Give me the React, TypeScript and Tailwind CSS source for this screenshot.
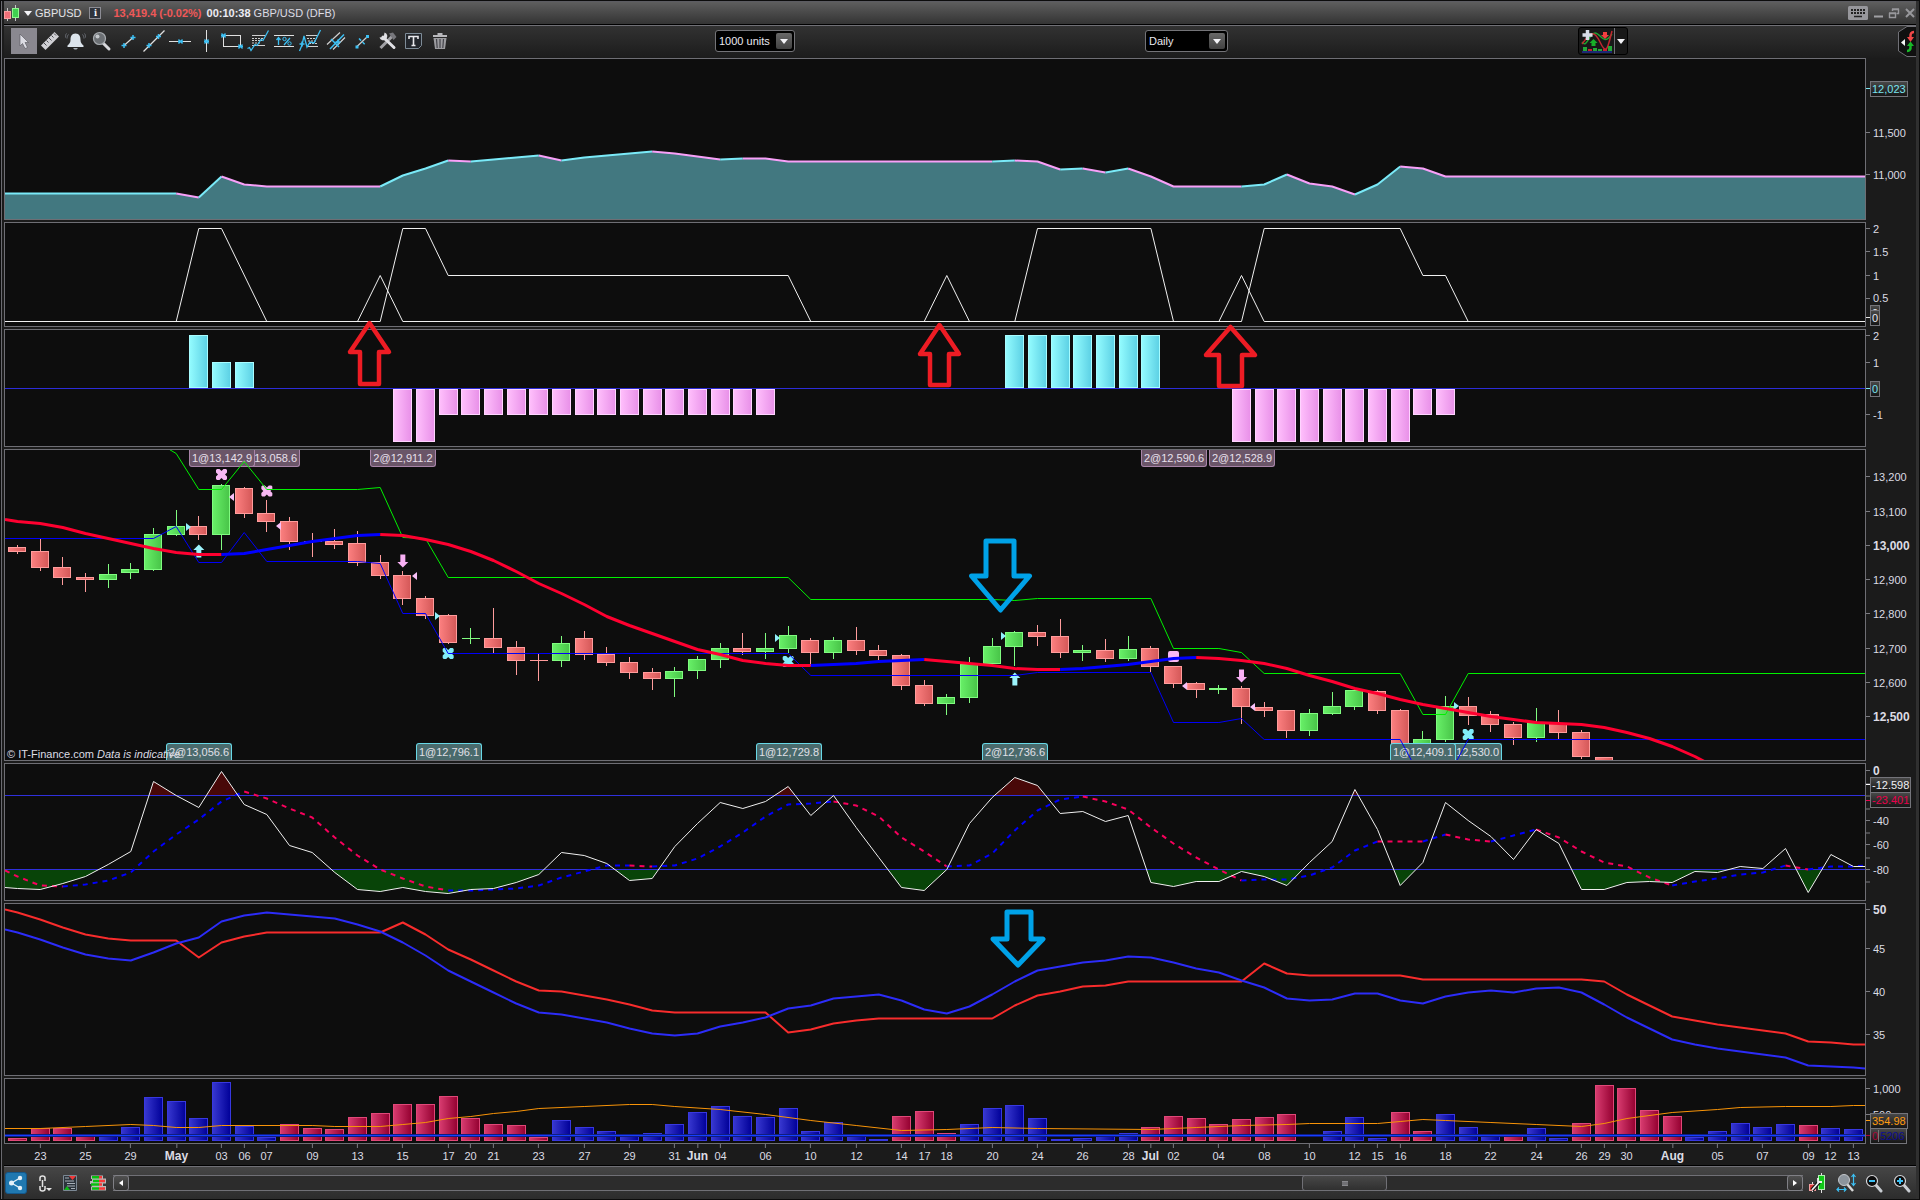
import type { ReactNode } from "react";

type Point = [number, number];
type Run = [number, number, string];
type Tick = { y: number; text?: string; bold?: boolean };
type Box = { y: number; text: ReactNode; tone: string; mark?: string };

// Plot coordinates: bar 0 sits at x=17.5, bars outside the range stick to the plot edges
const X = (i: number) => (i < 0 ? 5 : i > 81 ? 1865 : 17.5 + i * 22.667);
const BX = (i: number) => Math.round(X(i) - 0.5);
const toPoints = (pts: Point[]) => pts.map(([i, y]) => `${X(i).toFixed(1)},${y + 0.5}`).join(" ");
const series = (ys: number[]): Point[] => ys.map((y, n) => [n - 1, y]);

const WHITE = "#f0f0f0";
const CYAN = "#7aeaf8";
const PINK = "#f8a0f8";
const BLUE = "#3cc0f4";

const EQUITY: Point[] = [
  [-1, 193], [7, 193], [8, 197], [9, 176], [10, 184], [11, 186], [16, 186], [17, 175], [18, 168], [19, 160],
  [20, 161], [21, 159], [22, 157], [23, 155], [24, 160], [25, 157], [26, 155], [27, 153], [28, 151], [29, 153],
  [30, 156], [31, 159], [32, 158], [33, 158], [34, 161], [43, 161], [44, 160], [45, 161], [46, 169], [47, 168],
  [48, 172], [49, 168], [50, 176], [51, 186], [54, 186], [55, 184], [56, 174], [57, 183], [58, 186], [59, 194],
  [60, 184], [61, 166], [62, 168], [63, 176], [82, 176],
];
const EQUITY_RUNS: Run[] = [
  [-1, 7, CYAN], [7, 8, PINK], [8, 9, CYAN], [9, 16, PINK], [16, 19, CYAN], [19, 20, PINK], [20, 23, CYAN],
  [23, 24, PINK], [24, 28, CYAN], [28, 31, PINK], [31, 32, CYAN], [32, 43, PINK], [43, 44, CYAN], [44, 46, PINK],
  [46, 47, CYAN], [47, 48, PINK], [48, 49, CYAN], [49, 54, PINK], [54, 56, CYAN], [56, 59, PINK], [59, 61, CYAN],
  [61, 82, PINK],
];

const SIGNAL_A: Point[] = [
  [-1, 321], [7, 321], [8, 228], [9, 228], [11, 321], [16, 321], [17, 228], [18, 228], [19, 275], [34, 275],
  [35, 321], [44, 321], [45, 228], [50, 228], [51, 321], [54, 321], [55, 228], [61, 228], [62, 275], [63, 275],
  [64, 321], [82, 321],
];
const SIGNAL_B: Point[] = [
  [-1, 321], [15, 321], [16, 275], [17, 321], [40, 321], [41, 275], [42, 321], [53, 321], [54, 275], [55, 321], [82, 321],
];

const POSITIONS: [number, number, number][] = [
  [8, 8, 2], [9, 10, 1], [17, 18, -2], [19, 33, -1], [44, 50, 2], [54, 61, -2], [62, 63, -1],
];

// [up, body top, body bottom, high, low]
const CANDLES: [number, number, number, number, number][] = [
  [0, 547, 552, 545, 554], [0, 551, 568, 539, 571], [0, 567, 578, 557, 585], [0, 577, 580, 573, 592],
  [1, 574, 580, 564, 588], [1, 569, 573, 563, 579], [1, 534, 570, 528, 571], [1, 526, 535, 510, 536],
  [0, 526, 535, 516, 540], [1, 485, 535, 484, 550], [0, 488, 514, 487, 518], [0, 513, 522, 500, 532],
  [0, 521, 542, 517, 550], [0, 541, 542, 533, 557], [0, 541, 545, 529, 549], [0, 543, 563, 531, 566],
  [0, 562, 576, 555, 579], [0, 575, 599, 571, 605], [0, 598, 616, 596, 619], [0, 615, 643, 614, 644],
  [1, 638, 639, 628, 644], [0, 638, 648, 608, 653], [0, 647, 661, 641, 675], [0, 660, 661, 654, 681],
  [1, 643, 661, 636, 667], [0, 638, 655, 631, 660], [0, 654, 663, 647, 666], [0, 662, 673, 657, 679],
  [0, 672, 679, 668, 690], [1, 671, 679, 667, 697], [1, 659, 671, 656, 679], [1, 648, 660, 643, 668],
  [0, 648, 652, 633, 655], [1, 648, 652, 633, 659], [1, 635, 649, 626, 653], [0, 640, 653, 638, 666],
  [1, 640, 653, 637, 659], [0, 640, 651, 627, 655], [0, 650, 656, 645, 660], [0, 655, 686, 654, 690],
  [0, 685, 704, 680, 706], [1, 697, 704, 694, 715], [1, 664, 698, 657, 703], [1, 646, 664, 638, 666],
  [1, 632, 647, 631, 666], [0, 632, 637, 625, 646], [0, 636, 653, 619, 658], [1, 650, 653, 645, 661],
  [0, 650, 659, 639, 662], [1, 649, 659, 636, 661], [0, 648, 667, 646, 672], [0, 666, 684, 666, 688],
  [0, 683, 690, 682, 698], [1, 688, 690, 685, 694], [0, 688, 707, 686, 724], [0, 707, 711, 702, 717],
  [0, 710, 731, 710, 738], [1, 713, 731, 709, 736], [1, 706, 714, 692, 715], [1, 690, 707, 689, 710],
  [0, 691, 711, 690, 714], [0, 710, 744, 709, 744], [1, 739, 744, 731, 744], [1, 706, 740, 696, 742],
  [0, 706, 716, 697, 725], [0, 714, 725, 711, 732], [0, 724, 738, 722, 745], [1, 722, 738, 708, 742],
  [0, 723, 733, 710, 739], [0, 732, 757, 730, 759], [0, 757, 770, 757, 770],
];

const AVERAGE = series([
  519, 521, 523, 527, 533, 538, 543, 548, 552, 554, 554, 553, 549, 545, 541, 538, 535, 534, 535, 539, 544, 551, 560,
  571, 583, 593, 604, 616, 625, 633, 641, 649, 654, 660, 663, 665, 665, 664, 663, 661, 660, 659, 661, 663, 665, 668,
  669, 669, 668, 666, 664, 661, 658, 657, 658, 660, 663, 668, 675, 681, 688, 693, 699, 704, 708, 712, 716, 719, 722,
  723, 724, 727, 732, 738, 746, 756, 768,
]);
const AVERAGE_RUNS: Run[] = [
  [-1, 9, "#ff0030"], [9, 16, "#0000ff"], [16, 35, "#ff0030"], [35, 40, "#0000ff"], [40, 46, "#ff0030"],
  [46, 52, "#0000ff"], [52, 75, "#ff0030"],
];

const UPPER: Point[] = [
  [6.7, 449], [7, 453], [8, 489], [9, 489], [10, 461], [11, 489], [15, 489], [16, 487], [17, 537], [18, 538],
  [19, 577], [34, 577], [35, 599], [43, 599], [44, 600], [45, 598], [50, 598], [51, 648], [53, 648], [54, 652],
  [55, 673], [61, 673], [62, 714], [63, 714], [64, 673], [82, 673],
];
const LOWER: Point[] = [
  [-1, 538], [6, 538], [7, 526], [8, 562], [9, 562], [10, 532], [11, 561], [15, 561], [16, 563], [17, 613],
  [18, 613], [19, 653], [34, 653], [35, 675], [44, 675], [45, 672], [50, 672], [51, 722], [53, 722], [54, 718],
  [55, 739], [61, 739], [62, 781], [63, 781], [64, 739], [82, 739],
];

const EXIT_TAGS: [number, string][] = [
  [11, "1@13,058.6"], [9, "1@13,142.9"], [17, "2@12,911.2"], [51, "2@12,590.6"], [54, "2@12,528.9"],
];
const ENTRY_TAGS: [number, string][] = [
  [8, "2@13,056.6"], [19, "1@12,796.1"], [34, "1@12,729.8"], [44, "2@12,736.6"], [64, "1@12,530.0"],
  [62, "1@12,409.1"],
];

const OSCILLATOR = series([
  887, 888, 889, 883, 876, 864, 851, 781, 795, 807, 771, 804, 814, 845, 852, 872, 889, 891, 887, 891, 893, 889, 888,
  882, 874, 852, 855, 863, 880, 878, 846, 823, 802, 808, 801, 786, 815, 795, 827, 857, 887, 890, 869, 823, 797, 777,
  785, 813, 811, 821, 815, 882, 886, 881, 881, 871, 876, 885, 862, 841, 789, 829, 885, 862, 802, 820, 836, 859, 829,
  843, 889, 889, 882, 881, 882, 871, 872, 866, 868, 848, 892, 854, 866, 866,
]);
const TREND = series([
  870, 876, 885, 886, 884, 880, 872, 851, 834, 819, 801, 791, 798, 808, 817, 837, 855, 869, 878, 886, 890, 890, 889,
  888, 885, 877, 871, 865, 865, 866, 865, 858, 846, 832, 816, 804, 803, 801, 805, 816, 837, 851, 866, 865, 853, 830,
  810, 799, 796, 801, 809, 827, 843, 857, 869, 880, 879, 879, 875, 867, 850, 841, 841, 841, 834, 839, 841, 835, 829,
  837, 851, 862, 866, 877, 885, 881, 878, 874, 872, 865, 869, 866, 866, 865,
]);
const TREND_DOWN = "#f8005c";
const TREND_UP = "#0000ff";
const TREND_RUNS: Run[] = [
  [-1, 2, TREND_DOWN], [2, 10, TREND_UP], [10, 19, TREND_DOWN], [19, 27, TREND_UP], [27, 28, TREND_DOWN],
  [28, 36, TREND_UP], [36, 41, TREND_DOWN], [41, 47, TREND_UP], [47, 54, TREND_DOWN], [54, 60, TREND_UP],
  [60, 62, TREND_DOWN], [62, 63, TREND_UP], [63, 65, TREND_DOWN], [65, 67, TREND_UP], [67, 73, TREND_DOWN],
  [73, 78, TREND_UP], [78, 79, TREND_DOWN], [79, 82, TREND_UP],
];

const SLOW: Point[] = [
  [-1, 909], [0, 912], [1, 919], [2, 927], [3, 934], [4, 938], [5, 940], [7, 940], [8, 957], [9, 942], [10, 936],
  [11, 932], [16, 932], [17, 922], [18, 934], [19, 949], [20, 959], [21, 970], [22, 981], [23, 990], [24, 991],
  [25, 995], [26, 999], [27, 1004], [28, 1010], [29, 1012], [33, 1012], [34, 1032], [35, 1029], [36, 1023],
  [37, 1020], [38, 1018], [43, 1018], [44, 1005], [45, 995], [46, 991], [47, 986], [48, 985], [49, 981], [54, 981],
  [55, 963], [56, 973], [57, 975], [61, 975], [62, 979], [69, 979], [70, 981], [71, 994], [72, 1005], [73, 1016],
  [74, 1020], [75, 1024], [76, 1027], [77, 1030], [78, 1033], [79, 1041], [80, 1042], [81, 1044], [82, 1044],
];
const FAST = series([
  929, 932, 939, 947, 954, 958, 960, 952, 943, 937, 921, 915, 912, 914, 916, 918, 924, 931, 942, 955, 970, 981, 992,
  1003, 1012, 1014, 1018, 1022, 1028, 1033, 1035, 1033, 1026, 1022, 1017, 1008, 1005, 998, 996, 994, 1000, 1009, 1013,
  1006, 994, 981, 970, 966, 962, 960, 956, 957, 962, 968, 972, 980, 987, 998, 1000, 999, 993, 993, 1000, 1003, 996,
  992, 990, 992, 988, 987, 992, 1004, 1017, 1028, 1039, 1044, 1048, 1051, 1054, 1057, 1065, 1066, 1067, 1068,
]);

const VOLUME = [
  1138, 1128, 1128, 1134, 1135, 1127, 1097, 1101, 1118, 1082, 1126, 1137, 1124, 1128, 1129, 1117, 1113, 1104, 1104,
  1096, 1118, 1124, 1125, 1137, 1120, 1127, 1131, 1135, 1133, 1124, 1112, 1106, 1116, 1117, 1108, 1131, 1122, 1135,
  1139, 1116, 1111, 1133, 1124, 1108, 1105, 1118, 1139, 1138, 1136, 1133, 1127, 1116, 1118, 1124, 1119, 1117, 1114,
  1140, 1131, 1117, 1138, 1112, 1131, 1114, 1127, 1136, 1134, 1128, 1138, 1123, 1085, 1088, 1110, 1116, 1137, 1131,
  1123, 1127, 1124, 1125, 1128, 1129,
];
const DOWN_DAYS = new Set([
  0, 1, 2, 3, 12, 13, 14, 15, 16, 17, 18, 19, 20, 21, 22, 23, 39, 40, 41, 50, 51, 52, 53, 54, 55, 56, 61, 62, 66, 69,
  70, 71, 72, 73, 79,
]);
const VOLUME_AVERAGE: Point[] = [
  [-1, 1128], [1, 1128], [3, 1126], [5, 1124], [6, 1125], [7, 1127], [8, 1127], [9, 1125], [13, 1125], [14, 1126],
  [16, 1126], [17, 1124], [18, 1122], [19, 1118], [20, 1116], [21, 1113], [22, 1111], [23, 1108], [25, 1106],
  [27, 1104], [28, 1104], [29, 1106], [31, 1109], [33, 1114], [35, 1120], [37, 1125], [39, 1130], [41, 1129],
  [43, 1127], [45, 1128], [50, 1129], [52, 1127], [54, 1125], [56, 1124], [57, 1123], [60, 1123], [61, 1121],
  [62, 1119], [63, 1120], [65, 1122], [67, 1124], [69, 1126], [70, 1123], [71, 1118], [73, 1112], [75, 1109],
  [76, 1107], [78, 1106], [80, 1106], [81, 1105], [82, 1105],
];

const DATES: [number, string][] = [
  [1, "23"], [3, "25"], [5, "29"], [7, "May"], [9, "03"], [10, "06"], [11, "07"], [13, "09"], [15, "13"], [17, "15"],
  [19, "17"], [20, "20"], [21, "21"], [23, "23"], [25, "27"], [27, "29"], [29, "31"], [30, "Jun"], [31, "04"],
  [33, "06"], [35, "10"], [37, "12"], [39, "14"], [40, "17"], [41, "18"], [43, "20"], [45, "24"], [47, "26"],
  [49, "28"], [50, "Jul"], [51, "02"], [53, "04"], [55, "08"], [57, "10"], [59, "12"], [60, "15"], [61, "16"],
  [63, "18"], [65, "22"], [67, "24"], [69, "26"], [70, "29"], [71, "30"], [73, "Aug"], [75, "05"], [77, "07"],
  [79, "09"], [80, "12"], [81, "13"],
];

const Line = ({ points, color, width = 1 }: { points: Point[]; color: string; width?: number }) => (
  <polyline points={toPoints(points)} fill="none" stroke={color} strokeWidth={width} strokeLinejoin="round" />
);

const RunLine = ({ points, runs, width, dash }: { points: Point[]; runs: Run[]; width: number; dash?: string }) => (
  <>
    {runs.map(([from, to, color]) => (
      <polyline
        key={from}
        points={toPoints(points.filter(([i]) => i >= from && i <= to))}
        fill="none"
        stroke={color}
        strokeWidth={width}
        strokeDasharray={dash}
        strokeLinejoin="round"
      />
    ))}
  </>
);

const Plot = ({ top, bottom, children }: { top: number; bottom: number; children: ReactNode }) => (
  <svg
    viewBox={`5 ${top + 1} 1860 ${bottom - top - 1}`}
    preserveAspectRatio="none"
    className="absolute inset-0 block size-full"
  >
    {children}
  </svg>
);

type PanelProps = { top: number; bottom: number; ticks: Tick[]; boxes?: Box[]; children: ReactNode };

const Panel = ({ top, bottom, ticks, boxes = [], children }: PanelProps) => {
  const place = (y: number) => ({ top: `${((y + 0.5 - top) / (bottom + 1 - top)) * 100}%` });
  return (
    <section className="flex min-h-0 basis-0" style={{ flexGrow: bottom + 1 - top }}>
      <div className="relative flex-1 overflow-hidden border border-[#6e6e74] bg-[#0d0d0d]">{children}</div>
      <div className="relative w-[50px] text-[11px] leading-4 text-[#dcdce4]">
        {ticks.map((tick) => (
          <div key={tick.y} className="absolute left-0 flex -translate-y-1/2 items-center" style={place(tick.y)}>
            <span className="h-px w-1 bg-[#7c7c82]" />
            <span className={tick.bold ? "ml-[3px] text-xs leading-4 font-bold" : "ml-[3px]"}>{tick.text}</span>
          </div>
        ))}
        {boxes.map((box) => (
          <div key={box.y} className="absolute left-0 z-10 flex -translate-y-1/2 items-center" style={place(box.y)}>
            <span className={`h-px w-1 ${box.mark ?? "bg-transparent"}`} />
            <span
              className={`border border-[#74747a] bg-linear-to-b from-[#484848] to-[#161616] px-px leading-[14px] ${box.tone}`}
            >
              {box.text}
            </span>
          </div>
        ))}
      </div>
    </section>
  );
};

const TradeTags = ({ tags, entry }: { tags: [number, string][]; entry?: boolean }) => (
  <>
    {tags.map(([i, text]) => (
      <span
        key={i}
        className={
          entry
            ? "absolute bottom-0 h-[17px] w-[66px] -translate-x-1/2 rounded-t-[3px] border border-b-0 border-[#68d8e6] bg-[#4a6a6c] text-center text-[11px] leading-4 text-[#e0e0e8]"
            : "absolute top-0 h-[17px] w-[66px] -translate-x-1/2 rounded-b-[3px] border border-t-0 border-[#a884a8] bg-[#6a5568] text-center text-[11px] leading-4 text-[#e8e0ec]"
        }
        style={{ left: `${((BX(i) + 1 - 5) / 1860) * 100}%` }}
      >
        {text}
      </span>
    ))}
  </>
);

const Cross = ({ i, y, color }: { i: number; y: number; color: string }) => (
  <g transform={`translate(${X(i)} ${y})`} fill={color}>
    <path d="M-4.500 -5.500h2.500l2 2l2 -2h2.500l1 1v2.500l-2 2l2 2v2.500l-1 1h-2.500l-2 -2l-2 2h-2.500l-1 -1v-2.500l2 -2l-2 -2v-2.500z" />
  </g>
);

const SmallArrow = ({ i, y, up }: { i: number; y: number; up?: boolean }) => (
  <path
    transform={`translate(${X(i)} ${y}) scale(1 ${up ? 1 : -1})`}
    d="M0 -6.500L5.500 -1H2.500V6.500H-2.500V-1H-5.500Z"
    fill={up ? "#9cf4fc" : "#f8b0f4"}
  />
);

const Star = ({ x, y }: { x: number; y: number }) => (
  <path d={`M${x - 2} ${y - 2}l4 4m0 -4l-4 4M${x - 2.5} ${y}h5`} stroke={BLUE} strokeWidth={1.3} />
);
const Plus = ({ x, y }: { x: number; y: number }) => (
  <path d={`M${x - 2.5} ${y}h5M${x} ${y - 2.5}v5`} stroke={BLUE} strokeWidth={1.5} />
);

const TOOLS: [string, ReactNode][] = [
  ["Pointer", <path d="M9 6V18L11.500 15.500L14 20.500L16.500 19.500L14 14.500H17.500Z" fill="#dcdce4" stroke="#55555c" strokeWidth={0.6} />],
  [
    "Ruler",
    <>
      <path d="M4 17.500L17.500 4L22 8.500L8.500 22Z" fill="#d0d0d4" />
      <path d="M7 15l2.500 2.500M9.500 12.500l2 2M12 10l2.500 2.500M14.500 7.500l2 2M17 5.500l2 2" stroke="#4a4a50" strokeWidth={1} />
    </>,
  ],
  [
    "Alert",
    <>
      <path d="M12.500 5.500c-4 0 -5 3 -5 6.500c0 3 -1.500 4 -3 5.500v1.500h16v-1.500c-1.500 -1.500 -3 -2.500 -3 -5.500c0 -3.500 -1 -6.500 -5 -6.500z" fill="#dce4ec" />
      <path d="M10 20h5l-1.500 1.500h-2z" fill="#a8b0b8" />
      <path d="M5.500 6.500c-1 1 -1.500 2.500 -1.500 4M3.500 5.500c-1 1 -1 3 -1 4M19.500 6.500c1 1 1.500 2.500 1.500 4M21.500 5.500c1 1 1 3 1 4" fill="none" stroke="#6c7078" />
    </>,
  ],
  [
    "Magnifier",
    <>
      <path d="M14.500 15.500L20 21" stroke="#d8d8dc" strokeWidth={3} strokeLinecap="round" />
      <circle cx={10.500} cy={10.500} r={6} fill="#6c7074" stroke="#a8acb0" strokeWidth={1.200} />
      <circle cx={8.500} cy={8.500} r={2} fill="#c4c8cc" />
    </>,
  ],
  [
    "Segment",
    <>
      <path d="M9 17.500L18 9.500" stroke="#e0e0e0" strokeWidth={1.200} />
      <Plus x={9} y={17.500} />
      <Plus x={18} y={9.500} />
    </>,
  ],
  [
    "Line",
    <>
      <path d="M2.500 23.500L23.500 2.500" stroke="#e0e0e0" strokeWidth={1.200} />
      <Plus x={8} y={17.500} />
      <Plus x={17.500} y={8.500} />
    </>,
  ],
  [
    "Horizontal line",
    <>
      <path d="M2 13.500H24" stroke="#e0e0e0" />
      <Star x={13.500} y={13.500} />
    </>,
  ],
  [
    "Vertical line",
    <>
      <path d="M13.500 2V24" stroke="#e0e0e0" />
      <Star x={13.500} y={13.500} />
    </>,
  ],
  [
    "Rectangle",
    <>
      <rect x={4.500} y={7.500} width={17} height={11} fill="none" stroke="#e0e0e0" />
      <Star x={4.500} y={7.500} />
      <Star x={21.500} y={18.500} />
    </>,
  ],
  [
    "Fibonacci",
    <>
      <path d="M7 7.500H20M7 17.500H20" stroke="#d0d0d0" />
      <path d="M7 10.500H19M7 12.500H17M7 15H15" stroke="#d0d0d0" strokeDasharray="2 1" />
      <path d="M2.500 20.500l2 -1l1.500 3l4 -6l2 1l4 -6l2 1l5.500 -10" fill="none" stroke={BLUE} strokeWidth={1.300} />
    </>,
  ],
  [
    "Percentage",
    <>
      <path d="M3 7.500H23M3 18.500H23" stroke="#e0e0e0" />
      <path d="M7.500 17V10M5.500 12l2 -2.500l2 2.500M13 17l6 -7" fill="none" stroke={BLUE} strokeWidth={1.300} />
      <circle cx={13.500} cy={11} r={1.700} fill="none" stroke={BLUE} />
      <circle cx={18.500} cy={15.500} r={1.700} fill="none" stroke={BLUE} />
    </>,
  ],
  [
    "Fibonacci extension",
    <>
      <path d="M9 7.500H21M11 18.500H21" stroke="#d0d0d0" />
      <path d="M10 10.500H20M11 13H20M12 15.500H20" stroke="#d0d0d0" strokeDasharray="2 1" />
      <path d="M2.500 23l2.500 -6l2 -9l3 11l3 -5l4 1l6.500 -13" fill="none" stroke={BLUE} strokeWidth={1.300} />
      <Plus x={5} y={16} />
    </>,
  ],
  [
    "Channel",
    <>
      <path d="M4 16.500L17 4.500M10 21.500L22 9.500" stroke="#d0d0d0" strokeWidth={1.200} />
      <path d="M7 21L21 6.500M8 11l8 8" stroke={BLUE} strokeWidth={1.500} />
      <Plus x={15} y={14} />
    </>,
  ],
  [
    "Points",
    <>
      <path d="M8 18.500L18.500 8.500" stroke="#d0d0d0" strokeWidth={1.200} />
      <path d="M6.500 17.500h3v3h-3zM17 7h3v3h-3z" fill={BLUE} />
      <path d="M10 10.500l7 7" stroke={BLUE} strokeDasharray="3 2" strokeWidth={1.500} />
    </>,
  ],
  [
    "Settings",
    <>
      <path d="M5.500 20L17 8.500" stroke="#a0a0a4" strokeWidth={3} />
      <path d="M14 5.500l4 -1l3.500 4.500l-3 3z" fill="#77777c" />
      <path d="M8 9L19 19.500" stroke="#e0e0e4" strokeWidth={3} strokeLinecap="round" />
      <path d="M9.500 4.500a4 4 0 1 1 -5 5l3 -.5l1.500 -1.500z" fill="#e0e0e4" />
    </>,
  ],
  [
    "Text",
    <>
      <path d="M4.500 5.500H20.500V17.500L17.500 20.500H4.500Z" fill="#22262c" stroke="#7e8c98" />
      <path d="M8 11V8.500H17V11M12.500 8.500V17.500M10.500 17.500H14.500" fill="none" stroke="#e8e8ec" strokeWidth={1.600} />
    </>,
  ],
  [
    "Delete",
    <>
      <path d="M6.500 10h13l-1.500 11h-10z" fill="#9c9ca0" />
      <path d="M6 8h14M10.500 6h5" stroke="#b8b8bc" strokeWidth={2} />
      <path d="M9.500 11l.7 9M13 11v9M16.500 11l-.7 9" stroke="#44444a" strokeWidth={1.200} />
    </>,
  ],
];

const Triangle = () => (
  <svg viewBox="0 0 8 5" className="h-[5px] w-2">
    <path d="M0 0H8L4 5Z" fill="#f4f4f8" />
  </svg>
);

const Dropdown = ({ label, value, options, width }: { label: string; value: string; options: string[]; width: string }) => (
  <div className={`relative h-[22px] ${width}`}>
    <select
      aria-label={label}
      defaultValue={value}
      className="block h-[22px] w-full appearance-none rounded-[3px] border border-[#747478] bg-black pl-[3px] text-[11px] leading-4 text-[#e8e8f0]"
    >
      {options.map((option) => (
        <option key={option}>{option}</option>
      ))}
    </select>
    <span className="pointer-events-none absolute top-[3px] right-[3px] flex h-4 w-4 items-center justify-center rounded-[2px] bg-linear-to-b from-[#686868] to-[#424242]">
      <Triangle />
    </span>
  </div>
);

const TitleBar = () => (
  <header className="flex h-6 items-center border-t border-b border-t-[#5c5c62] border-b-black bg-linear-to-b from-[#5e5e5e] to-[#343434] text-[11px] leading-4">
    <svg viewBox="0 0 16 16" className="h-4 w-4">
      <path d="M3.500 3V16M11.500 0V16" stroke="#c8c8c8" />
      <rect x={0.500} y={6.500} width={6} height={7} fill="#f07078" stroke="#f8a0a0" />
      <rect x={8.500} y={3.500} width={6} height={9} fill="#40d050" stroke="#90f890" />
    </svg>
    <button aria-label="Instrument list" className="ml-1 flex">
      <Triangle />
    </button>
    <h1 className="ml-[3px] text-[#e4e4e8]">GBPUSD</h1>
    <button
      aria-label="Instrument information"
      className="ml-2 flex h-3 w-3 items-center justify-center border border-[#8c8c94] bg-[#30343c] font-serif text-[10px] leading-3 font-bold text-white"
    >
      i
    </button>
    <span className="ml-3 font-bold text-[#f05858]">13,419.4 (-0.02%)</span>
    <span className="ml-[5px] font-bold text-[#ececf4]">00:10:38</span>
    <span className="ml-[3px] text-[#dcdce4]">GBP/USD (DFB)</span>
    <div className="ml-auto flex items-center gap-1">
      <button aria-label="Keyboard">
        <svg viewBox="0 0 20 14" className="block h-3.5 w-5">
          <rect width={20} height={14} rx={1.500} fill="#97979c" />
          <path d="M3 4H17M3 7H17" stroke="#222" strokeWidth={2} strokeDasharray="2 1" />
          <path d="M6 10.500H14" stroke="#222" strokeWidth={1.500} />
        </svg>
      </button>
      <button aria-label="Minimize">
        <svg viewBox="0 0 12 12" className="block size-3">
          <path d="M2 9.500H11" stroke="#a0a0a4" strokeWidth={2} />
        </svg>
      </button>
      <button aria-label="Restore">
        <svg viewBox="0 0 12 12" className="block size-3" fill="none" stroke="#98989c">
          <path d="M4.500 4V2.500H10.500V6.500H8.500M4 2H11" strokeWidth={1.400} />
          <path d="M1.500 6.500H7.500V10.500H1.500ZM1 6H8" strokeWidth={1.400} />
        </svg>
      </button>
      <button aria-label="Close">
        <svg viewBox="0 0 12 12" className="block size-3">
          <path d="M2 2L10 10M10 2L2 10" stroke="#98989c" strokeWidth={2} />
        </svg>
      </button>
    </div>
  </header>
);

const Toolbar = () => (
  <div className="flex h-[33px] items-start border-t border-[#707076] bg-linear-to-b from-[#323232] to-[#1c1c1c]">
    <div className="ml-[7px] flex pt-[2px]">
      {TOOLS.map(([label, icon], n) => (
        <button key={label} aria-label={label} className={n === 0 ? "size-[26px] bg-[#8a8890]" : "size-[26px]"}>
          <svg viewBox="0 0 26 26" className="block size-[26px]">
            {icon}
          </svg>
        </button>
      ))}
    </div>
    <div className="flex-[262]" />
    <div className="pt-1">
      <Dropdown label="Displayed units" value="1000 units" options={["200 units", "500 units", "1000 units"]} width="w-20" />
    </div>
    <div className="flex-[350]" />
    <div className="pt-1">
      <Dropdown label="Timeframe" value="Daily" options={["Hourly", "Daily", "Weekly"]} width="w-[83px]" />
    </div>
    <div className="flex-[350]" />
    <div className="mt-px flex h-7 w-[50px] rounded-[3px] border border-black bg-[#181818]">
      <button aria-label="Add indicator" className="flex w-[35px] items-center justify-center">
        <svg viewBox="0 0 32 24" className="h-6 w-8">
          <path d="M1 13C6 20 8 4 14 4S22 18 31 5" fill="none" stroke="#1fa030" strokeWidth={1.500} />
          <path d="M1 15C8 6 12 -2 19 13S27 17 31 2" fill="none" stroke="#c02830" strokeWidth={1.500} />
          <path d="M2 18h4v4h-4zM12 19h4v3h-4zM17 20h4v2h-4zM27 17h4v5h-4z" fill="#24a838" />
          <path d="M7 20h4v2h-4zM22 20h4v2h-4z" fill="#c82030" />
          <path d="M1 23H31" stroke="#2038d0" />
          <path d="M6.500 1v10M1.500 6h10" stroke="#d8dce8" strokeWidth={3.500} />
          <path d="M22 3h4v3h2l-4 4l-4 -4h2z" fill="#f04040" />
          <path d="M12.500 10l4 4h-2v3h-4v-3h-2z" fill="#18b028" />
        </svg>
      </button>
      <button aria-label="Indicator menu" className="flex flex-1 items-center justify-center border-l border-[#707076]">
        <Triangle />
      </button>
    </div>
    <div className="flex-[270]" />
    <button aria-label="Show orders panel" className="block">
      <svg viewBox="0 0 18 31" className="block h-[31px] w-[18px]">
        <path d="M18 .5H9L.5 6V25L9 30.500H18" fill="#101010" stroke="#707076" />
        <path d="M7 13L3 16.500L7 20Z" fill="#f4f4f4" />
        <path d="M16 6Q12 6 12.500 11V13" fill="none" stroke="#f04848" strokeWidth={2.500} />
        <path d="M9 11H16L12.500 16Z" fill="#f04848" />
        <path d="M9 25Q13 25 12.500 20V18" fill="none" stroke="#18b828" strokeWidth={2.500} />
        <path d="M9 20H16L12.500 15.500Z" fill="#18b828" />
      </svg>
    </button>
  </div>
);

const EquityPanel = () => (
  <Panel
    top={58}
    bottom={219}
    ticks={[{ y: 132, text: "11,500" }, { y: 174, text: "11,000" }]}
    boxes={[{ y: 88, text: "12,023", tone: "text-[#78e4f0]", mark: "bg-[#78e4f0]" }]}
  >
    <Plot top={58} bottom={219}>
      <polygon points={`5,219 ${toPoints(EQUITY)} 1865,219`} fill="#427880" />
      <RunLine points={EQUITY} runs={EQUITY_RUNS} width={2} />
    </Plot>
  </Panel>
);

const SignalPanel = () => (
  <Panel
    top={222}
    bottom={326}
    ticks={[
      { y: 228, text: "2" },
      { y: 251, text: "1.5" },
      { y: 275, text: "1" },
      { y: 298, text: "0.5" },
    ]}
    boxes={[
      { y: 312, text: "0", tone: "text-[#e8e8f0]" },
      { y: 317, text: "0", tone: "text-[#e8e8f0]", mark: "bg-[#e8e8e8]" },
    ]}
  >
    <Plot top={222} bottom={326}>
      <Line points={SIGNAL_A} color={WHITE} />
      <Line points={SIGNAL_B} color={WHITE} />
    </Plot>
  </Panel>
);

const PositionPanel = () => (
  <Panel
    top={329}
    bottom={446}
    ticks={[{ y: 335, text: "2" }, { y: 362, text: "1" }, { y: 414, text: "-1" }]}
    boxes={[{ y: 388, text: "0", tone: "text-[#78e4f0]", mark: "bg-[#78e4f0]" }]}
  >
    <Plot top={329} bottom={446}>
      <defs>
        <linearGradient id="long">
          <stop offset="0" stopColor="#94fcff" />
          <stop offset="1" stopColor="#5cd0e4" />
        </linearGradient>
        <linearGradient id="short">
          <stop offset="0" stopColor="#ffc0fc" />
          <stop offset="1" stopColor="#e890e8" />
        </linearGradient>
      </defs>
      {POSITIONS.flatMap(([from, to, size]) =>
        Array.from({ length: to - from + 1 }, (_, n) => {
          const height = Math.abs(size) === 2 ? 53 : 26;
          return (
            <rect
              key={from + n}
              x={BX(from + n) - 8.5}
              y={size > 0 ? 388.5 - height : 389.5}
              width={18}
              height={height - 1}
              fill={size > 0 ? "url(#long)" : "url(#short)"}
              stroke={size > 0 ? "#a8fcff" : "#ffd4ff"}
            />
          );
        }),
      )}
      <path d="M5 388.5H1865" stroke="#2c2cd8" />
    </Plot>
  </Panel>
);

const PricePanel = () => (
  <Panel
    top={449}
    bottom={760}
    ticks={[
      { y: 476, text: "13,200" },
      { y: 511, text: "13,100" },
      { y: 545, text: "13,000", bold: true },
      { y: 579, text: "12,900" },
      { y: 613, text: "12,800" },
      { y: 648, text: "12,700" },
      { y: 682, text: "12,600" },
      { y: 716, text: "12,500", bold: true },
    ]}
  >
    <Plot top={449} bottom={760}>
      <defs>
        <linearGradient id="up">
          <stop offset="0" stopColor="#68f068" />
          <stop offset="1" stopColor="#48c448" />
        </linearGradient>
        <linearGradient id="down">
          <stop offset="0" stopColor="#fc8080" />
          <stop offset="1" stopColor="#d45858" />
        </linearGradient>
      </defs>
      {CANDLES.map(([up, top, bottom, high, low], i) => {
        const x = BX(i);
        const edge = up ? "#80fc80" : "#ff9c9c";
        return (
          <g key={i} stroke={edge}>
            <path d={`M${x + 0.5} ${high}V${low}`} />
            {bottom - top < 2 ? (
              <path d={`M${x - 8} ${top + 0.5}H${x + 10}`} />
            ) : (
              <rect x={x - 8.5} y={top + 0.5} width={17} height={bottom - top - 1} fill={up ? "url(#up)" : "url(#down)"} />
            )}
          </g>
        );
      })}
    </Plot>
    <TradeTags tags={EXIT_TAGS} />
    <TradeTags tags={ENTRY_TAGS} entry />
    <p className="absolute bottom-0 left-0.5 text-[11px] leading-3 text-[#dcdce4]">
      © IT-Finance.com <em>Data is indicative</em>
    </p>
    <Plot top={449} bottom={760}>
      <Cross i={9} y={474.5} color="#f8b8f4" />
      <Cross i={11} y={491} color="#f8b8f4" />
      <Cross i={19} y={653.5} color="#80ecf8" />
      <Cross i={34} y={661.5} color="#80ecf8" />
      <Cross i={64} y={734.5} color="#80ecf8" />
      <rect x={X(51) - 5.5} y={651} width={11} height={11} rx={2} fill="#f8b8f4" />
      <SmallArrow i={8} y={551} up />
      <SmallArrow i={44} y={679} up />
      <SmallArrow i={17} y={561} />
      <SmallArrow i={54} y={676} />
      {[[232, 497], [279, 526], [415, 576], [1185, 686], [1253, 707]].map(([x, y]) => (
        <path key={x} d={`M${x - 3} ${y}l5 -4v8z`} fill="#f8c0f8" />
      ))}
      {[[188, 527], [437, 616], [777, 638], [1003, 636], [1456, 706]].map(([x, y]) => (
        <path key={x} d={`M${x + 3} ${y}l-5 -4v8z`} fill="#90f0fc" />
      ))}
      <Line points={UPPER} color="#00f000" />
      <Line points={LOWER} color="#0000f8" />
      <RunLine points={AVERAGE} runs={AVERAGE_RUNS} width={3} />
    </Plot>
  </Panel>
);

const OscillatorPanel = () => (
  <Panel
    top={763}
    bottom={900}
    ticks={[
      { y: 770, text: "0", bold: true },
      { y: 783 },
      { y: 795 },
      { y: 808 },
      { y: 820, text: "-40" },
      { y: 832 },
      { y: 844, text: "-60" },
      { y: 857 },
      { y: 869, text: "-80" },
      { y: 881 },
    ]}
    boxes={[
      { y: 784, text: "-12.598", tone: "text-[#f0f0f4]", mark: "bg-white" },
      { y: 800, text: "-23.401", tone: "text-[#e8004c]", mark: "bg-[#e8004c]" },
    ]}
  >
    <Plot top={763} bottom={900}>
      <clipPath id="overbought">
        <rect x={5} y={763} width={1860} height={32} />
      </clipPath>
      <clipPath id="oversold">
        <rect x={5} y={869} width={1860} height={32} />
      </clipPath>
      <polygon points={`5,795 ${toPoints(OSCILLATOR)} 1865,795`} fill="#480808" clipPath="url(#overbought)" />
      <polygon points={`5,869 ${toPoints(OSCILLATOR)} 1865,869`} fill="#084408" clipPath="url(#oversold)" />
      <path d="M5 795.5H1865M5 869.5H1865" stroke="#3030dc" />
      <RunLine points={TREND} runs={TREND_RUNS} width={2} dash="5 5" />
      <Line points={OSCILLATOR} color="#f0f0f0" />
    </Plot>
  </Panel>
);

const StrengthPanel = () => (
  <Panel
    top={903}
    bottom={1075}
    ticks={[
      { y: 909, text: "50", bold: true },
      { y: 948, text: "45" },
      { y: 991, text: "40" },
      { y: 1034, text: "35" },
    ]}
  >
    <Plot top={903} bottom={1075}>
      <Line points={SLOW} color="#f82c2c" width={2} />
      <Line points={FAST} color="#2c2cf8" width={2} />
    </Plot>
  </Panel>
);

const VolumePanel = () => (
  <Panel
    top={1078}
    bottom={1143}
    ticks={[{ y: 1088, text: "1,000" }, { y: 1114, text: "500" }]}
    boxes={[
      { y: 1120, text: "354.98", tone: "text-[#ff9c10]", mark: "bg-[#ff9c10]" },
      {
        y: 1135,
        text: (
          <>
            <span className="mr-px border-r border-[#74747a] text-[#a8083c]">0</span>5206
          </>
        ),
        tone: "text-[#0c0c94]",
        mark: "bg-[#a8083c]",
      },
    ]}
  >
    <Plot top={1078} bottom={1143}>
      <defs>
        <linearGradient id="volumeUp">
          <stop offset="0" stopColor="#3838d0" />
          <stop offset="1" stopColor="#000098" />
        </linearGradient>
        <linearGradient id="volumeDown">
          <stop offset="0" stopColor="#d83c70" />
          <stop offset="1" stopColor="#940030" />
        </linearGradient>
      </defs>
      {VOLUME.map((top, i) => {
        const down = DOWN_DAYS.has(i);
        return (
          <rect
            key={i}
            x={BX(i) - 8.5}
            y={top + 0.5}
            width={18}
            height={1140 - top}
            fill={down ? "url(#volumeDown)" : "url(#volumeUp)"}
            stroke={down ? "#e04878" : "#3838e0"}
          />
        );
      })}
      <path d="M5 1135.5H1865" stroke="#101c80" strokeWidth={3} />
      <path d="M5 1135.5H1865" stroke="#1440ff" />
      <Line points={VOLUME_AVERAGE} color="#f89408" />
    </Plot>
  </Panel>
);

const Annotations = () => (
  <svg
    viewBox="4 58 1862 1086"
    preserveAspectRatio="none"
    className="pointer-events-none absolute top-0 left-0 z-10 h-full w-[calc(100%-50px)]"
    fill="none"
    strokeLinejoin="round"
  >
    <g stroke="#ed1c24" strokeWidth={4.500}>
      <path d="M369.500 323L389 352H379V384H360V352H350Z" />
      <path d="M939.500 325L959 354H949V385H930V354H920Z" />
      <path d="M1230.500 327L1255 355H1242V386H1219V355H1206Z" />
    </g>
    <g stroke="#00a2e8" strokeWidth={5}>
      <path d="M1000.500 610L1029.500 576H1014V541H986V576H971.500Z" />
      <path d="M1018 965L1043 939H1031V912H1007V939H993Z" />
    </g>
  </svg>
);

const DateAxis = () => (
  <div className="flex h-[21px]">
    <div className="relative flex-1 text-[#dcdce4]">
      {DATES.map(([i, text]) => (
        <div
          key={i}
          className="absolute top-0 flex -translate-x-1/2 flex-col items-center"
          style={{ left: `${((BX(i) + 0.5 - 4) / 1862) * 100}%` }}
        >
          <span className="h-1 w-px bg-[#7c7c82]" />
          <span className={/[A-Z]/.test(text) ? "text-xs leading-4 font-bold" : "text-[11px] leading-4"}>{text}</span>
        </div>
      ))}
    </div>
    <div className="w-[50px]" />
  </div>
);

const Footer = () => (
  <footer className="flex h-[33px] items-center border-t border-[#707076] bg-linear-to-b from-[#464646] to-[#2c2c2c] pl-px">
    <button aria-label="Share" className="flex h-[22px] w-[22px] items-center justify-center rounded-[3px] border border-[#14588c] bg-[#2078b0]">
      <svg viewBox="0 0 16 16" className="size-4">
        <path d="M12 3L3.500 8L12 13" fill="none" stroke="#e4f0f8" strokeWidth={1.300} />
        <circle cx={12} cy={3} r={2.200} fill="#e4f0f8" />
        <circle cx={3.500} cy={8} r={2.500} fill="#e4f0f8" />
        <circle cx={12} cy={13} r={2.200} fill="#e4f0f8" />
      </svg>
    </button>
    <button aria-label="Link window" className="ml-[11px]">
      <svg viewBox="0 0 16 17" className="block h-[17px] w-4" fill="none" stroke="#e4e4e4" strokeWidth={1.500}>
        <path d="M2 6V3Q2 1 4.500 1T7 3V6M2 11V14Q2 16 4.500 16T7 14V11M4.500 5V12" />
        <path d="M8 13H14L11 16Z" fill="#e4e4e4" stroke="none" />
      </svg>
    </button>
    <button aria-label="Order list" className="ml-[9px]">
      <svg viewBox="0 0 14 16" className="block h-4 w-3.5">
        <path d="M.5 .5H13.500V15.500H.5Z" fill="#2c343c" stroke="#7c8894" />
        <path d="M2 3H6M2 6H11M4 8.500H12M4 11H12M8 13.500H12" stroke="#a8b0b8" />
        <path d="M6 1H13L9.500 5Z" fill="#f03838" />
        <path d="M1 15H7L4 11Z" fill="#10b818" />
      </svg>
    </button>
    <button aria-label="Market depth" className="ml-[13px]">
      <svg viewBox="0 0 16 16" className="block size-4">
        <path d="M1 .5H13V3.500H16V8.500H13V11H16V15.500H1V11.500H2V9H0V6H2V4H1Z" fill="#b8b8b8" />
        <path d="M2 2.200H9M3 6H9M1 9.500H9M2 13.500H9" stroke="#08c010" strokeWidth={2.400} />
        <path d="M9 2.200H12M9 6H15M9 9.500H12M9 13.500H15" stroke="#f83838" strokeWidth={2.400} />
      </svg>
    </button>
    <div className="ml-[7px] flex h-4 flex-1 items-stretch border-y border-[#707076]">
      <button aria-label="Scroll left" className="-my-px flex w-4 items-center justify-center rounded-[3px] border border-[#808086] bg-linear-to-b from-[#505050] to-[#303030]">
        <svg viewBox="0 0 4 6" className="h-1.5 w-1">
          <path d="M4 0V6L0 3Z" fill="#fff" />
        </svg>
      </button>
      <div className="flex flex-1 bg-[#2c2c2c]">
        <div className="flex-[1174]" />
        <button aria-label="Scroll thumb" className="-my-px flex flex-[84] items-center justify-center rounded-[3px] border border-[#707076] bg-linear-to-b from-[#484848] to-[#303030]">
          <span className="h-[5px] w-1.5 border-y border-[#88888c] bg-[#707074]" />
        </button>
        <div className="flex-[400]" />
      </div>
      <button aria-label="Scroll right" className="-my-px flex w-4 items-center justify-center rounded-[3px] border border-[#808086] bg-linear-to-b from-[#505050] to-[#303030]">
        <svg viewBox="0 0 4 6" className="h-1.5 w-1">
          <path d="M0 0V6L4 3Z" fill="#fff" />
        </svg>
      </button>
    </div>
    <div className="mr-1 ml-[6px] flex items-center gap-[9px]">
      <button aria-label="Chart settings">
        <svg viewBox="0 0 18 20" className="block h-5 w-[18px]">
          <path d="M3.500 9V19M12.500 0V20" stroke="#e0e0e0" />
          <rect x={0.500} y={11.500} width={6} height={6} fill="#e03838" stroke="#f4a0a0" />
          <rect x={9.500} y={2.500} width={6} height={14} fill="#10c818" stroke="#b0f0b0" />
          <path d="M3 17L11 8" stroke="#111" strokeWidth={4} />
          <path d="M3 17L11 8M9 5V9H13" fill="none" stroke="#f0f0f0" strokeWidth={1.800} />
        </svg>
      </button>
      <button aria-label="Fit chart">
        <svg viewBox="0 0 20 20" className="block size-5">
          <path d="M11 11L17 18" stroke="#d8d8d8" strokeWidth={2.500} />
          <circle cx={8} cy={7} r={5.500} fill="#8c949c" stroke="#c4c8cc" />
          <path d="M17.500 2V12M15.500 4l2 -2.500l2 2.500M15.500 10l2 2.500l2 -2.500M1 16.500H10M3 14.500l-2 2l2 2M8 14.500l2 2l-2 2" fill="none" stroke={BLUE} strokeWidth={1.200} />
        </svg>
      </button>
      {["Zoom out", "Zoom in"].map((label) => (
        <button key={label} aria-label={label}>
          <svg viewBox="0 0 19 19" className="block size-[19px]">
            <path d="M10 10L16 17" stroke="#c8ccd2" strokeWidth={3} strokeLinecap="round" />
            <circle cx={7} cy={7} r={5.500} fill="#0c0c0c" stroke="#d8d8dc" strokeWidth={1.200} />
            <path d={label === "Zoom in" ? "M4 7H10M7 4V10" : "M4 7H10"} stroke={BLUE} strokeWidth={2} />
          </svg>
        </button>
      ))}
    </div>
  </footer>
);

const App = () => {
  return (
    <main className="h-screen min-h-[720px] bg-[#0c0c0c] p-px font-['Liberation_Sans',Arial,sans-serif]">
      <div className="flex h-full flex-col border-r-[3px] border-l border-r-[#303030] border-l-[#6a6a70] bg-[#1b1b1b] pl-0.5">
        <TitleBar />
        <Toolbar />
        <div className="relative flex min-h-0 flex-1 flex-col gap-0.5">
          <EquityPanel />
          <SignalPanel />
          <PositionPanel />
          <PricePanel />
          <OscillatorPanel />
          <StrengthPanel />
          <VolumePanel />
          <Annotations />
        </div>
        <DateAxis />
        <div className="h-px bg-black" />
        <Footer />
      </div>
    </main>
  );
};

export default App;
